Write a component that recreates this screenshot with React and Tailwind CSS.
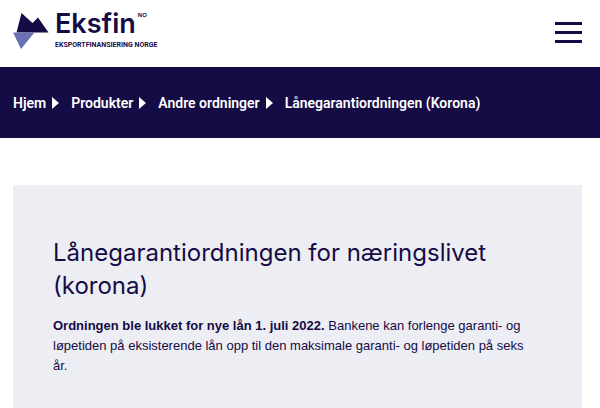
import React from "react";

const breadcrumbs = [
  { label: "Hjem", href: "#hjem" },
  { label: "Produkter", href: "#produkter" },
  { label: "Andre ordninger", href: "#andre-ordninger" },
  { label: "Lånegarantiordningen (Korona)" },
];

const Logo = () => (
  <a href="#hjem" className="flex items-start gap-1.5">
    <svg width="36" height="38" viewBox="0 0 36 38" aria-hidden="true">
      <path d="M8.5 1L3.5 20.5H35.5L25 5.5L19.5 11Z" fill="#150b45" />
      <path d="M0 20.5H21.5L8 37Z" fill="#6b72b3" />
    </svg>
    <span className="flex flex-col">
      <span className="flex items-start gap-0.5">
        <span className="font-[Inter,sans-serif] text-[27px] leading-6 font-semibold">Eksfin</span>
        <span className="font-[Liberation_Sans,sans-serif] text-[6px] leading-[6px] font-bold">NO</span>
      </span>
      <span className="mt-1 text-[7px] leading-[11px] font-bold">EKSPORTFINANSIERING NORGE</span>
    </span>
  </a>
);

const Header = () => (
  <header className="flex items-start justify-between pt-3 pr-[18px] pb-4 pl-[13px]">
    <Logo />
    <button type="button" aria-label="Meny" className="mt-2.5 flex flex-col gap-1.5">
      <span className="h-[3px] w-[27px] bg-[#150b45]" />
      <span className="h-[3px] w-[27px] bg-[#150b45]" />
      <span className="h-[3px] w-[27px] bg-[#150b45]" />
    </button>
  </header>
);

const Breadcrumbs = () => (
  <nav aria-label="Brødsmulesti" className="bg-[#150b45] px-[13px] pt-[26px] pb-[25px] text-white">
    <ol className="flex flex-wrap items-center gap-x-3 text-sm font-semibold">
      {breadcrumbs.map((item) => (
        <li key={item.label} className="flex items-center gap-1.5">
          {item.href ? (
            <>
              <a href={item.href}>{item.label}</a>
              <svg width="7" height="12" viewBox="0 0 7 12" fill="currentColor" aria-hidden="true">
                <path d="M0 0L7 6L0 12Z" />
              </svg>
            </>
          ) : (
            <span aria-current="page">{item.label}</span>
          )}
        </li>
      ))}
    </ol>
  </nav>
);

const App = () => {
  return (
    <div className="bg-white font-[Roboto,sans-serif] text-[#150b45]">
      <Header />
      <Breadcrumbs />
      <main className="pt-[47px] pr-[18px] pl-[13px]">
        <article className="bg-[#edeef4] pt-[51px] pr-12 pb-8 pl-10">
          <h1 className="font-[Inter,sans-serif] text-2xl leading-[33px] font-normal">
            Lånegarantiordningen for næringslivet (korona)
          </h1>
          <p className="mt-3.5 font-[Liberation_Sans,sans-serif] text-[13px] leading-5">
            <strong className="font-bold">Ordningen ble lukket for nye lån 1. juli 2022.</strong>{" "}
            Bankene kan forlenge garanti- og løpetiden på eksisterende lån opp til den maksimale
            garanti- og løpetiden på seks år.
          </p>
        </article>
      </main>
    </div>
  );
};

export default App;
